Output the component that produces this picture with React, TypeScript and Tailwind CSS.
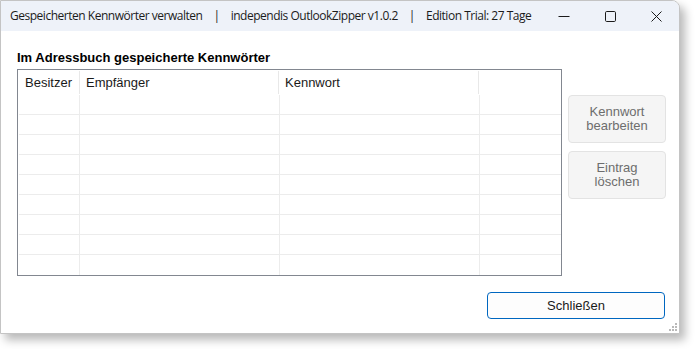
import React from "react";

const rows = Array.from({ length: 9 });

export default function App() {
  return (
    <div className="w-[695px] h-[349px] bg-white overflow-hidden">
      <div
        className="w-[680px] h-[334px] bg-white border border-[#c4c4c4] rounded-tr-[8px] shadow-[5px_6px_10px_rgba(0,0,0,0.28)] flex flex-col overflow-hidden"
      >
        {/* Title bar */}
        <div className="h-[30px] bg-[#eef2f9] flex items-center shrink-0" style={{ fontFamily: '"Open Sans", "Noto Sans", sans-serif' }}>
          <div className="pl-[9px] text-[12px] text-[#1b1b1b] flex items-center whitespace-nowrap flex-1 tracking-[-0.48px]">
            <span>Gespeicherten Kennwörter verwalten</span>
            <span className="mx-[11px]">|</span>
            <span>independis OutlookZipper v1.0.2</span>
            <span className="mx-[11px]">|</span>
            <span>Edition Trial: 27 Tage</span>
          </div>
          <div className="flex h-full">
            <div className="w-[46px] h-full flex items-center justify-center">
              <svg width="12" height="12" viewBox="0 0 12 12">
                <line x1="0.5" y1="6.5" x2="11.5" y2="6.5" stroke="#1b1b1b" strokeWidth="1" />
              </svg>
            </div>
            <div className="w-[46px] h-full flex items-center justify-center">
              <svg width="11" height="11" viewBox="0 0 11 11">
                <rect x="0.5" y="0.5" width="10" height="10" rx="1.2" fill="none" stroke="#1b1b1b" strokeWidth="1" />
              </svg>
            </div>
            <div className="w-[46px] h-full flex items-center justify-center">
              <svg width="11" height="11" viewBox="0 0 11 11">
                <path d="M0.5 0.5 L10.5 10.5 M10.5 0.5 L0.5 10.5" stroke="#1b1b1b" strokeWidth="1" />
              </svg>
            </div>
          </div>
        </div>

        {/* Content */}
        <div className="flex-1 flex flex-col pl-[16px] relative" style={{ fontFamily: '"Liberation Sans", Arial, sans-serif' }}>
          <div className="mt-[19px] text-[13px] leading-[15px] font-bold text-black">
            Im Adressbuch gespeicherte Kennwörter
          </div>
          <div className="flex mt-[4px]">
            <div className="w-[545px] h-[207px] border border-[#828790] flex flex-col">
              {/* Header */}
              <div className="h-[25px] flex text-[13px] text-[#1a1a1a] shrink-0">
                <div className="w-[62px] pl-[7px] flex items-center border-r border-[#e8e8e8] my-[1px]">Besitzer</div>
                <div className="w-[199px] pl-[6px] flex items-center border-r border-[#e8e8e8] my-[1px]">Empfänger</div>
                <div className="w-[200px] pl-[6px] flex items-center border-r border-[#e8e8e8] my-[1px]">Kennwort</div>
                <div className="flex-1" />
              </div>
              {rows.map((_, i) => (
                <div key={i} className={`h-[20px] flex shrink-0 ml-[1px] ${i < 8 ? "border-b border-[#ececec]" : ""}`}>
                  <div className="w-[61px] border-r border-[#ececec]" />
                  <div className="w-[200px] border-r border-[#ececec]" />
                  <div className="w-[200px] border-r border-[#ececec]" />
                  <div className="flex-1" />
                </div>
              ))}
            </div>
            <div className="flex flex-col ml-[6px] mt-[26px] gap-[8px] text-[13px] leading-[14px] text-[#6d6d6d]">
              <div className="w-[98px] h-[48px] bg-[#f5f5f5] border border-[#e3e3e3] rounded-[4px] flex items-center justify-center text-center">
                Kennwort<br />bearbeiten
              </div>
              <div className="w-[98px] h-[48px] bg-[#f5f5f5] border border-[#e3e3e3] rounded-[4px] flex items-center justify-center text-center">
                Eintrag<br />löschen
              </div>
            </div>
          </div>
          <div className="flex justify-end pr-[14px] mt-[16px]">
            <div className="w-[178px] h-[27px] bg-[#fdfdfd] border border-[#0067c0] rounded-[4px] flex items-center justify-center text-[13px] text-[#1a1a1a]">
              Schließen
            </div>
          </div>
          <svg className="absolute right-[2px] bottom-[2px]" width="9" height="9" viewBox="0 0 9 9">
            <rect x="7" y="1" width="2" height="2" fill="#b9b9b9" />
            <rect x="4" y="4" width="2" height="2" fill="#b9b9b9" />
            <rect x="7" y="4" width="2" height="2" fill="#b9b9b9" />
            <rect x="1" y="7" width="2" height="2" fill="#b9b9b9" />
            <rect x="4" y="7" width="2" height="2" fill="#b9b9b9" />
            <rect x="7" y="7" width="2" height="2" fill="#b9b9b9" />
          </svg>
        </div>
      </div>
    </div>
  );
}
